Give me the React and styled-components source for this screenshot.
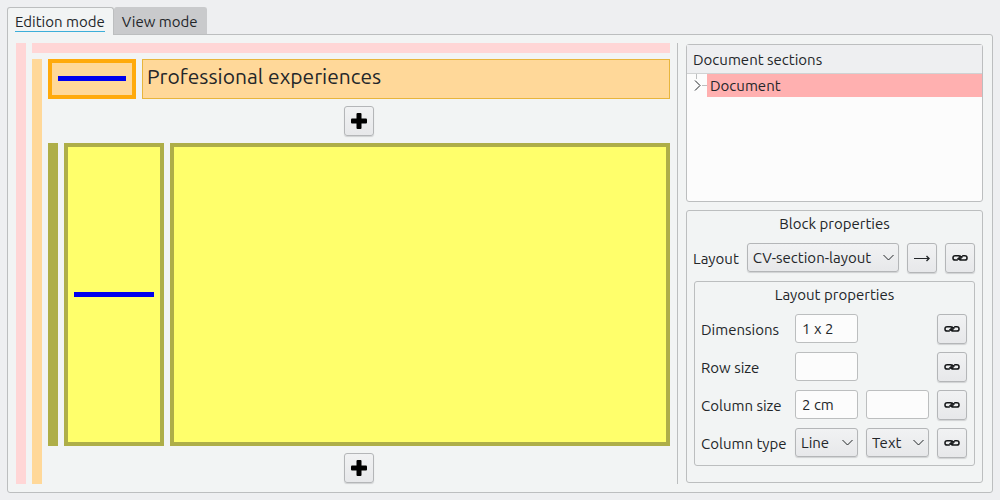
import React, { useState } from 'react';
import styled, { createGlobalStyle } from 'styled-components';

const line = '#bcbebf';
const ink = '#232629';

const GlobalStyle = createGlobalStyle`
  *, *::before, *::after { box-sizing: border-box; }
  body {
    margin: 0;
    background: #eeeff1;
    color: ${ink};
    font: 15px/20px Ubuntu, "Noto Sans", "Open Sans", sans-serif;
  }
  button, input, select { font: inherit; color: inherit; }
`;

const Window = styled.div`
  display: flex;
  flex-direction: column;
  min-height: 100vh;
  padding: 7px;
`;

const TabBar = styled.div`
  display: flex;
  align-items: flex-start;
`;

const Tab = styled.button`
  height: ${p => (p.$active ? 28 : 27)}px;
  margin-bottom: ${p => (p.$active ? -1 : 0)}px;
  padding: 3px 8px 3px 7px;
  position: relative;
  border: 1px solid ${p => (p.$active ? line : '#c9cacc')};
  border-bottom: 0;
  border-radius: 3px 3px 0 0;
  background: ${p => (p.$active ? '#f2f4f4' : '#c9cacc')};
`;

const TabLabel = styled.span`
  display: block;
  padding-top: 2px;
  border-bottom: 1px solid ${p => (p.$active ? '#3daed9' : 'transparent')};
  line-height: 18px;
`;

const Page = styled.main`
  flex: 1;
  display: flex;
  gap: 7px;
  padding: 8px 9px 8px 8px;
  border: 1px solid ${line};
  border-radius: 0 3px 3px 3px;
  background: #f2f4f4;
`;

const Row = styled.div`
  flex: 1;
  display: flex;
  gap: 6px;
  min-width: 0;
`;

const Column = styled.div`
  flex: 1;
  display: flex;
  flex-direction: column;
  gap: 6px;
  min-width: 0;
`;

const Bar = styled.div`
  flex: 0 0 10px;
  background: ${p => p.$color};
`;

const Stack = styled.div`
  flex: 1;
  display: flex;
  flex-direction: column;
  align-items: stretch;
  gap: 7px;
  min-width: 0;
  padding-bottom: 1px;
`;

const HeadingRow = styled.div`
  display: flex;
  gap: 6px;
  height: 40px;
`;

const LineCell = styled.div`
  flex: 0 0 ${p => p.$width}px;
  display: flex;
  align-items: center;
  padding: 0 6px 1px;
  border: 4px solid ${p => p.$edge};
  background: ${p => p.$fill};
  &::before {
    content: "";
    flex: 1;
    height: 5px;
    background: #00e;
  }
`;

const HeadingInput = styled.input`
  flex: 1;
  min-width: 0;
  padding: 0 4px 6px;
  border: 1px solid #e8b53c;
  border-radius: 0;
  background: #ffd899;
  && { font-size: 21px; }
`;

const TextCell = styled.div`
  flex: 1;
  border: 4px solid #aeae48;
  background: #ffff6b;
`;

const IconButton = styled.button`
  display: grid;
  place-items: center;
  align-self: ${p => (p.$centered ? 'center' : 'auto')};
  flex: 0 0 30px;
  width: 30px;
  height: 30px;
  padding: 0;
  border: 1px solid #b4b6b8;
  border-radius: 3px;
  background: linear-gradient(#f1f2f3, #e7e8ea);
  box-shadow: 0 1px 1px #d0d2d3;
`;

const GridEndButton = styled(IconButton)`
  grid-column: 4;
`;

const Divider = styled.div`
  flex: 0 0 1px;
  background: ${line};
`;

const Sidebar = styled.aside`
  flex: 0 0 297px;
  display: flex;
  flex-direction: column;
  gap: 8px;
  margin-left: 1px;
  padding: 1px 0;
`;

const Tree = styled.section`
  flex: 1;
  min-height: 158px;
  border: 1px solid ${line};
  border-radius: 3px;
  background: #fcfcfc;
`;

const TreeHeader = styled.h2`
  height: 29px;
  margin: 0;
  padding: 5px 6px 3px;
  border-bottom: 1px solid #d0d2d3;
  background: #eeeff1;
  font-size: 15px;
  font-weight: 400;
  line-height: 20px;
`;

const TreeItem = styled.div`
  display: flex;
  height: 23px;
`;

const TreeLabel = styled.span`
  flex: 1;
  padding: 2px 3px 1px;
  background: #ffb0b0;
`;

const Group = styled.section`
  padding: 0 7px ${p => p.$bottom}px;
  border: 1px solid ${line};
  border-radius: 3px;
`;

const GroupTitle = styled.h2`
  margin: 0;
  padding: 3px 0 9px;
  font-size: 15px;
  font-weight: 400;
  line-height: 20px;
  text-align: center;
`;

const LayoutRow = styled.div`
  display: flex;
  align-items: flex-start;
  gap: 8px;
  margin-bottom: 8px;
`;

const Label = styled.label`
  flex: none;
  height: 30px;
  margin-left: -1px;
  line-height: 32px;
  white-space: nowrap;
`;

const PropertyGrid = styled.div`
  display: grid;
  grid-template-columns: 85px 1fr 1fr 30px;
  gap: 8px;
  align-items: start;
`;

const Field = styled.input`
  width: 100%;
  height: 29px;
  padding: 0 6px;
  border: 1px solid ${line};
  border-radius: 3px;
  background: #fcfcfc;
`;

const SelectBox = styled.div`
  position: relative;
  flex: 1;
  min-width: 0;
  svg {
    position: absolute;
    right: 5px;
    top: 11px;
    pointer-events: none;
  }
`;

const Select = styled.select`
  appearance: none;
  display: block;
  width: 100%;
  height: 29px;
  padding: 0 16px 0 5px;
  border: 1px solid #b4b6b8;
  border-radius: 3px;
  background: linear-gradient(#f1f2f3, #e7e8ea);
  box-shadow: 0 1px 1px #d0d2d3;
`;

const PlusIcon = () => (
  <svg width="16" height="16" viewBox="0 0 16 16" aria-hidden="true">
    <rect x="0" y="5.500" width="16" height="5" rx="1" />
    <rect x="5.500" y="0" width="5" height="16" rx="1" />
  </svg>
);

const LinkIcon = () => (
  <svg width="16" height="8" viewBox="0 0 16 8" fill="none" stroke="#151719" strokeWidth="1.5" aria-hidden="true">
    <path d="M5.500 4.300C7 5.800 9 5.500 9 3.900C9 2.400 8 1.700 6.500 1.700H3.200C.2 1.700 .2 6.100 3.200 6.100H5.800" />
    <path d="M10.500 3.500C9 2 7 2.300 7 3.900C7 5.400 8 6.100 9.500 6.100H12.800C15.800 6.100 15.800 1.700 12.800 1.700H10.200" />
  </svg>
);

const ArrowIcon = () => (
  <svg width="16" height="8" viewBox="0 0 16 8" fill="none" stroke={ink} aria-hidden="true">
    <path d="M0 4.500H15" />
    <path d="M12.500 2L15 4.500L12.500 7" strokeWidth="1.4" />
  </svg>
);

const Dropdown = ({ id, label, options }) => (
  <SelectBox>
    <Select id={id} aria-label={label}>
      {options.map(o => <option key={o}>{o}</option>)}
    </Select>
    <svg width="11" height="8" viewBox="0 0 11 8" fill="none" stroke={ink} aria-hidden="true">
      <path d="M.5 1L5.500 6L10.500 1" />
    </svg>
  </SelectBox>
);

export default function App() {
  const [tab, setTab] = useState('Edition mode');
  return (
    <Window>
      <GlobalStyle />
      <TabBar role="tablist">
        {['Edition mode', 'View mode'].map(name => (
          <Tab key={name} role="tab" aria-selected={tab === name} $active={tab === name} onClick={() => setTab(name)}>
            <TabLabel $active={tab === name}>{name}</TabLabel>
          </Tab>
        ))}
      </TabBar>
      <Page>
        <Row>
          <Bar $color="#ffd6d6" />
          <Column>
            <Bar $color="#ffd6d6" />
            <Row>
              <Bar $color="#ffd899" />
              <Stack>
                <HeadingRow>
                  <LineCell $width={88} $edge="#ffaa0c" $fill="#ffd899" />
                  <HeadingInput aria-label="Section title" defaultValue="Professional experiences" />
                </HeadingRow>
                <IconButton $centered aria-label="Add block above"><PlusIcon /></IconButton>
                <Row>
                  <Bar $color="#aeae48" />
                  <LineCell $width={100} $edge="#aeae48" $fill="#ffff6b" />
                  <TextCell />
                </Row>
                <IconButton $centered aria-label="Add block below"><PlusIcon /></IconButton>
              </Stack>
            </Row>
          </Column>
        </Row>
        <Divider />
        <Sidebar>
          <Tree>
            <TreeHeader>Document sections</TreeHeader>
            <TreeItem>
              <svg width="20" height="23" viewBox="0 0 20 23" fill="none" aria-hidden="true">
                <path d="M9.500 0V5M15 11.500H20" stroke={line} />
                <path d="M8 6.500L13 11.500L8 16.500" stroke={ink} />
              </svg>
              <TreeLabel>Document</TreeLabel>
            </TreeItem>
          </Tree>
          <Group $bottom={16}>
            <GroupTitle>Block properties</GroupTitle>
            <LayoutRow>
              <Label htmlFor="layout">Layout</Label>
              <Dropdown id="layout" options={['CV-section-layout']} />
              <IconButton aria-label="Go to layout"><ArrowIcon /></IconButton>
              <IconButton aria-label="Link layout"><LinkIcon /></IconButton>
            </LayoutRow>
            <Group $bottom={7}>
              <GroupTitle>Layout properties</GroupTitle>
              <PropertyGrid>
                <Label htmlFor="dimensions">Dimensions</Label>
                <Field id="dimensions" defaultValue="1 x 2" />
                <GridEndButton aria-label="Link dimensions"><LinkIcon /></GridEndButton>
                <Label htmlFor="row-size">Row size</Label>
                <Field id="row-size" />
                <GridEndButton aria-label="Link row size"><LinkIcon /></GridEndButton>
                <Label htmlFor="column-size">Column size</Label>
                <Field id="column-size" defaultValue="2 cm" />
                <Field aria-label="Second column size" />
                <GridEndButton aria-label="Link column size"><LinkIcon /></GridEndButton>
                <Label htmlFor="column-type">Column type</Label>
                <Dropdown id="column-type" options={['Line', 'Text']} />
                <Dropdown label="Second column type" options={['Text', 'Line']} />
                <GridEndButton aria-label="Link column type"><LinkIcon /></GridEndButton>
              </PropertyGrid>
            </Group>
          </Group>
        </Sidebar>
      </Page>
    </Window>
  );
}
